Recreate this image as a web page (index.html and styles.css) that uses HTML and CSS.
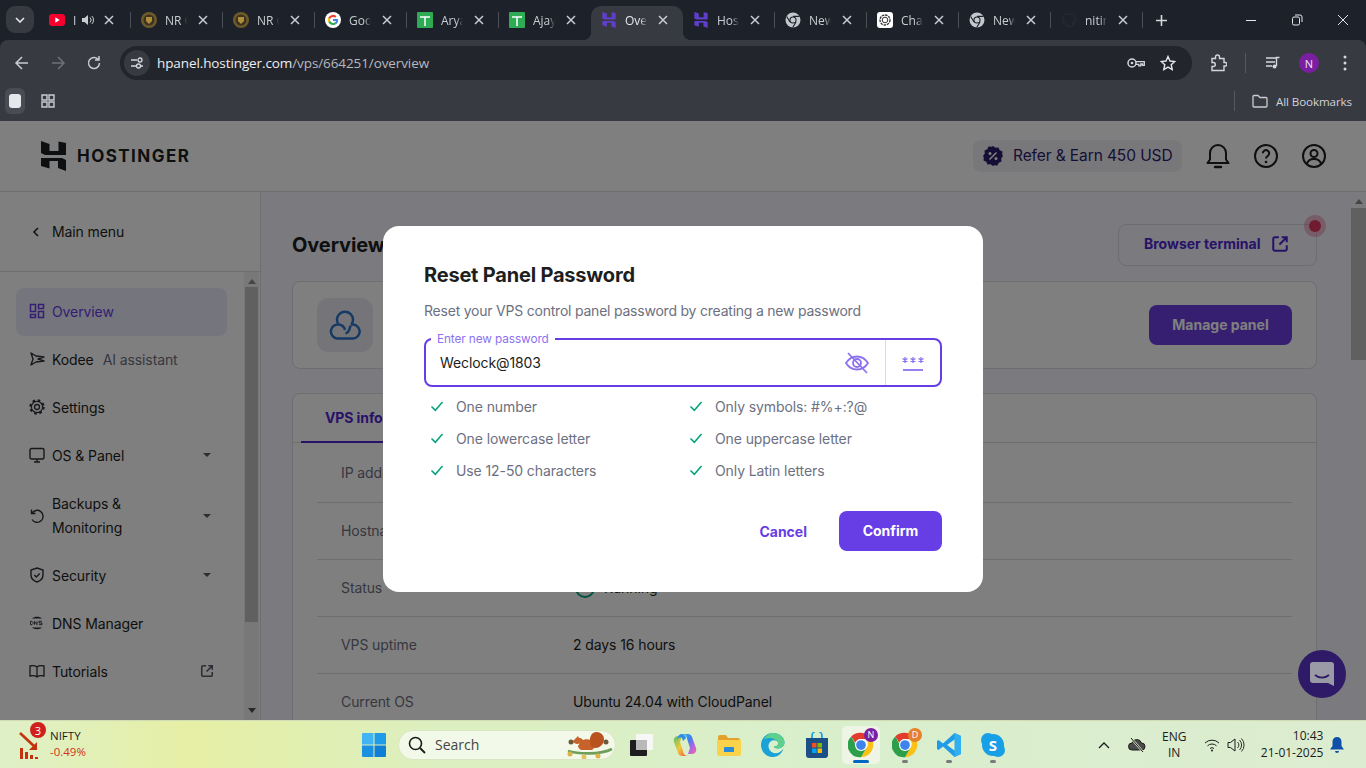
FILE: index.html
```html
<!DOCTYPE html>
<html lang="en">
<head>
<meta charset="utf-8">
<title>Overview</title>
<link rel="stylesheet" href="styles.css">
</head>
<body>
<svg class="defs" width="0" height="0" aria-hidden="true">
  <symbol id="x" viewBox="0 0 12 12"><path d="M2 2l8 8M10 2l-8 8" stroke="#c9ccd3" stroke-width="1.500" fill="none"/></symbol>
  <symbol id="hst" viewBox="0 0 25 30"><path d="M0 0l8.500 3v7h9V.500L25 2v12H4l-4-2zM0 17h21l4 2v11l-8-3v-7H8.500v7.500L0 25z"/></symbol>
  <symbol id="gchrome" viewBox="0 0 16 16"><circle cx="8" cy="8" r="7.500" fill="#c4c7ce"/><circle cx="8" cy="8" r="3.600" fill="#1d2129"/><circle cx="8" cy="8" r="2.500" fill="#c4c7ce"/><path d="M8 4.400h6.500M5 10l-3.300-5.500M11 10l-3.300 5.500" stroke="#1d2129" stroke-width="1.100"/></symbol>
  <symbol id="check" viewBox="0 0 14 12"><path d="M1.500 6.500l3.800 3.800 7.200-8.300" fill="none" stroke="#00a37a" stroke-width="1.500"/></symbol>
  <symbol id="caret" viewBox="0 0 10 6"><path d="M1 1h8l-4 4z"/></symbol>
  <symbol id="color-chrome" viewBox="0 0 32 32"><path d="M16 1a15 15 0 0 1 13 7.500H16a7.500 7.500 0 0 0-7 4.800L4 5.500A15 15 0 0 1 16 1z" fill="#e33b2e"/><path d="M29 8.500A15 15 0 0 1 16 31l6.500-11.300a7.500 7.500 0 0 0-.5-11.200z" fill="#fbc116"/><path d="M16 31A15 15 0 0 1 4 5.500l6 11a7.500 7.500 0 0 0 12.500 3.200z" fill="#2d9f4a"/><circle cx="16" cy="16" r="7.500" fill="#fff"/><circle cx="16" cy="16" r="6" fill="#3f83ec"/></symbol>
  <symbol id="ext" viewBox="0 0 16 16"><path d="M7 2H3.500A1.500 1.500 0 0 0 2 3.500v9A1.500 1.500 0 0 0 3.500 14h9a1.500 1.500 0 0 0 1.500-1.500V9M9.500 2H14v4.500M14 2L7.500 8.500" fill="none" stroke="currentColor" stroke-width="1.800"/></symbol>
  <linearGradient id="cop" x1="0" y1="0" x2="1" y2="1"><stop offset="0" stop-color="#2fb5e8"/><stop offset=".4" stop-color="#3f7ff0"/><stop offset=".7" stop-color="#b565e0"/><stop offset="1" stop-color="#f06a9a"/></linearGradient>
  <linearGradient id="cop2" x1="0" y1="0" x2="1" y2="1"><stop offset="0" stop-color="#58c26a"/><stop offset=".5" stop-color="#f0c83a"/><stop offset="1" stop-color="#f0563a"/></linearGradient>
</svg>

<header class="tabstrip">
  <button class="tabsearch"><svg width="10" height="6" viewBox="0 0 10 6"><path d="M1 1l4 4 4-4" fill="none" stroke="#e4e6ea" stroke-width="1.600"/></svg></button>
  <div class="tabs">
    <div class="tab"><svg class="fav" viewBox="0 0 16 12"><rect width="16" height="12" rx="3" fill="#f7002e"/><path d="M6.300 3.300l4.400 2.700-4.400 2.700z" fill="#fff"/></svg><span class="tab-title tiny">I</span><svg class="speaker" viewBox="0 0 14 14"><path d="M1 5v4h2.500L7 12V2L3.500 5z" fill="#c9ccd3"/><path d="M9 4.500a3.500 3.500 0 0 1 0 5M10.800 3a5.500 5.500 0 0 1 0 8" fill="none" stroke="#c9ccd3"/></svg><svg class="close"><use href="#x"/></svg></div>
    <div class="tab"><svg class="fav" viewBox="0 0 16 16"><circle cx="8" cy="8" r="8" fill="#6e5a2a"/><circle cx="8" cy="8" r="5.500" fill="#3c3320"/><path d="M5 5h6v4l-3 3-3-3z" fill="#b08d3c"/></svg><span class="tab-title">NR College</span><svg class="close"><use href="#x"/></svg></div>
    <div class="tab"><svg class="fav" viewBox="0 0 16 16"><circle cx="8" cy="8" r="8" fill="#6e5a2a"/><circle cx="8" cy="8" r="5.500" fill="#3c3320"/><path d="M5 5h6v4l-3 3-3-3z" fill="#b08d3c"/></svg><span class="tab-title">NR College</span><svg class="close"><use href="#x"/></svg></div>
    <div class="tab"><svg class="fav" viewBox="0 0 16 16"><circle cx="8" cy="8" r="8" fill="#fff"/><path d="M13 8.200c0-.4 0-.8-.1-1.100H8v2h2.900a2.400 2.400 0 0 1-1.100 1.600l1.700 1.300C12.500 11.100 13 9.800 13 8.200z" fill="#4285f4"/><path d="M8 13c1.400 0 2.600-.5 3.500-1.300l-1.700-1.300c-.5.300-1.100.5-1.800.5a3.100 3.100 0 0 1-2.900-2.100l-1.800 1.300A5.200 5.200 0 0 0 8 13z" fill="#34a853"/><path d="M5.100 8.800a3 3 0 0 1 0-1.900L3.300 5.600a5 5 0 0 0 0 4.500z" fill="#fbbc05"/><path d="M8 5c.8 0 1.500.3 2 .8l1.500-1.500A5.200 5.200 0 0 0 3.300 5.600l1.800 1.300A3.100 3.100 0 0 1 8 5z" fill="#ea4335"/></svg><span class="tab-title">Google</span><svg class="close"><use href="#x"/></svg></div>
    <div class="tab"><svg class="fav" viewBox="0 0 16 16"><rect width="16" height="16" rx="1" fill="#2faa55"/><path d="M3 5h10M8 5v9" stroke="#fff" stroke-width="1.500"/></svg><span class="tab-title">Arya</span><svg class="close"><use href="#x"/></svg></div>
    <div class="tab"><svg class="fav" viewBox="0 0 16 16"><rect width="16" height="16" rx="1" fill="#2faa55"/><path d="M3 5h10M8 5v9" stroke="#fff" stroke-width="1.500"/></svg><span class="tab-title">Ajay</span><svg class="close"><use href="#x"/></svg></div>
    <div class="tab active"><svg class="fav hpurple"><use href="#hst"/></svg><span class="tab-title">Overview</span><svg class="close"><use href="#x"/></svg></div>
    <div class="tab"><svg class="fav hpurple"><use href="#hst"/></svg><span class="tab-title">Hostinger</span><svg class="close"><use href="#x"/></svg></div>
    <div class="tab"><svg class="fav"><use href="#gchrome"/></svg><span class="tab-title">New Tab</span><svg class="close"><use href="#x"/></svg></div>
    <div class="tab"><svg class="fav" viewBox="0 0 16 16"><rect width="16" height="16" rx="3" fill="#fff"/><circle cx="8" cy="8" r="5" fill="none" stroke="#333" stroke-width="1.300" stroke-dasharray="2.500 .8"/><circle cx="8" cy="8" r="2.800" fill="none" stroke="#333"/></svg><span class="tab-title">ChatGPT</span><svg class="close"><use href="#x"/></svg></div>
    <div class="tab"><svg class="fav"><use href="#gchrome"/></svg><span class="tab-title">New Tab</span><svg class="close"><use href="#x"/></svg></div>
    <div class="tab"><svg class="fav" viewBox="0 0 16 16"><circle cx="8" cy="8" r="7.500" fill="#23272e"/><path d="M5 14v-2.500c-2 .3-2.500-1-3-1.500M11 14v-3c0-.8-.3-1.200-.6-1.500 1.600-.2 2.800-1 2.800-3 0-.7-.3-1.300-.7-1.800.2-.5.2-1.100-.1-1.800-.7 0-1.300.4-1.800.7a7 7 0 0 0-5.200 0C4.900 3.300 4.300 2.900 3.600 2.900c-.3.700-.3 1.300-.1 1.800-.4.500-.7 1.100-.7 1.800 0 2 1.200 2.800 2.800 3-.4.400-.6 1-.6 1.500" fill="#1d2129"/></svg><span class="tab-title">nitin</span><svg class="close"><use href="#x"/></svg></div>
    <button class="newtab"><svg width="13" height="13" viewBox="0 0 13 13"><path d="M6.500 1v11M1 6.500h11" stroke="#d5d7dc" stroke-width="1.600"/></svg></button>
  </div>
  <div class="winctl">
    <svg width="12" height="12" viewBox="0 0 12 12"><path d="M1 6.500h10" stroke="#e4e6ea"/></svg>
    <svg width="12" height="12" viewBox="0 0 12 12"><rect x="1.500" y="3" width="7" height="8" rx="1.500" fill="none" stroke="#e4e6ea"/><path d="M4 1h5a2 2 0 0 1 2 2v5" fill="none" stroke="#e4e6ea"/></svg>
    <svg width="12" height="12" viewBox="0 0 12 12"><path d="M1 1l10 10M11 1L1 11" stroke="#e4e6ea"/></svg>
  </div>
</header>

<nav class="toolbar">
  <div class="navbtns">
    <svg width="16" height="16" viewBox="0 0 16 16"><path d="M14 8H2.500M8 2L2 8l6 6" fill="none" stroke="#c9ccd3" stroke-width="1.500"/></svg>
    <svg width="16" height="16" viewBox="0 0 16 16"><path d="M2 8h11.500M8 2l6 6-6 6" fill="none" stroke="#6e7178" stroke-width="1.500"/></svg>
    <svg width="16" height="16" viewBox="0 0 16 16"><path d="M13.500 8A5.500 5.500 0 1 1 12 4.200M13 1v4h-4" fill="none" stroke="#c9ccd3" stroke-width="1.500"/></svg>
  </div>
  <div class="omnibox">
    <span class="site-chip"><svg width="14" height="14" viewBox="0 0 14 14"><path d="M1 4h6M11 10h2M1 10h5" stroke="#d5d7dc" stroke-width="1.300"/><circle cx="10" cy="4" r="2" fill="none" stroke="#d5d7dc" stroke-width="1.300"/><circle cx="8.500" cy="10" r="2" fill="none" stroke="#d5d7dc" stroke-width="1.300"/></svg></span>
    <span class="url"><b>hpanel.hostinger.com</b>/vps/664251/overview</span>
    <svg class="omni-key" width="18" height="12" viewBox="0 0 18 12"><circle cx="5" cy="6" r="4" fill="none" stroke="#d5d7dc" stroke-width="1.500"/><circle cx="5" cy="6" r="1.300" fill="#d5d7dc"/><path d="M9 4.700h8.300v3.600h-1.800V7h-1.700v1.800h-2V7.300H9" fill="none" stroke="#d5d7dc" stroke-width="1.300"/></svg>
    <svg class="omni-star" width="16" height="16" viewBox="0 0 16 16"><path d="M8 1.500l2 4.500 4.800.5-3.600 3.200 1 4.800L8 12.100l-4.200 2.400 1-4.800L1.200 6.500 6 6z" fill="none" stroke="#e4e6ea" stroke-width="1.400"/></svg>
  </div>
  <div class="tool-right">
    <svg class="t-ext" width="17" height="18" viewBox="0 0 17 18"><path d="M2 4.500h3.500V3a2 2 0 0 1 4 0v1.500H14v4h1.500a1.800 1.800 0 0 1 0 3.500H14v4.500H2v-4h1.300a2 2 0 0 0 0-4H2z" fill="none" stroke="#d5d7dc" stroke-width="1.400"/></svg>
    <span class="t-sep"></span>
    <svg class="t-media" width="16" height="14" viewBox="0 0 16 14"><path d="M1 2h11M1 6h9M1 10h6" stroke="#d5d7dc" stroke-width="1.400"/><path d="M14.500 1.500h-3V10" fill="none" stroke="#d5d7dc" stroke-width="1.400"/><circle cx="9.500" cy="10.500" r="2" fill="#d5d7dc"/></svg>
    <span class="avatar">N</span>
    <svg class="t-dots" width="4" height="16" viewBox="0 0 4 16"><circle cx="2" cy="2" r="1.500" fill="#d5d7dc"/><circle cx="2" cy="8" r="1.500" fill="#d5d7dc"/><circle cx="2" cy="14" r="1.500" fill="#d5d7dc"/></svg>
  </div>
</nav>

<div class="bookmarks">
  <span class="bm-first"><i></i></span>
  <svg class="bm-grid" width="14" height="14" viewBox="0 0 14 14"><path d="M1 1h5v5H1zM8 1h5v5H8zM1 8h5v5H1zM8 8h5v5H8z" fill="none" stroke="#c9ccd3" stroke-width="1.400"/></svg>
  <span class="bm-spacer"></span>
  <span class="t-sep bm-sep"></span>
  <svg width="16" height="14" viewBox="0 0 16 14"><path d="M1 2.500a1 1 0 0 1 1-1h4l2 2h6a1 1 0 0 1 1 1v7.500a1 1 0 0 1-1 1H2a1 1 0 0 1-1-1z" fill="none" stroke="#c9ccd3" stroke-width="1.300"/></svg>
  <span class="bm-all">All Bookmarks</span>
</div>

<main class="page">
  <div class="site-head">
    <svg class="logo"><use href="#hst"/></svg>
    <span class="wordmark">HOSTINGER</span>
    <span class="head-spacer"></span>
    <span class="refer"><svg width="20" height="20" viewBox="0 0 20 20"><path d="M10 0l2.500 1.800 3-.3 1.200 2.800 2.800 1.200-.3 3L20 10l-1.800 2.500.3 3-2.800 1.200-1.200 2.800-3-.3L10 20l-2.500-1.800-3 .3-1.200-2.800-2.800-1.200.3-3L0 10l1.800-2.500-.3-3 2.800-1.200 1.200-2.800 3 .3z" fill="#2f1c6a"/><path d="M13.500 6.500l-7 7" stroke="#fff" stroke-width="1.600"/><circle cx="7" cy="7.500" r="1.500" fill="#fff"/><circle cx="13" cy="12.500" r="1.500" fill="#fff"/></svg>Refer &amp; Earn 450 USD</span>
    <svg class="hicon" width="24" height="26" viewBox="0 0 24 26"><path d="M1.500 20h21l-2.500-3.500V10a8 8 0 0 0-16 0v6.500z" fill="none" stroke="#1d1e20" stroke-width="2" stroke-linejoin="round"/><path d="M9 24h6" stroke="#1d1e20" stroke-width="2.400" stroke-linecap="round"/></svg>
    <svg class="hicon" width="24" height="24" viewBox="0 0 24 24"><circle cx="12" cy="12" r="11" fill="none" stroke="#1d1e20" stroke-width="2"/><path d="M8.800 9.300a3.200 3.200 0 1 1 4.800 2.800c-1 .6-1.600 1.200-1.600 2.400" fill="none" stroke="#1d1e20" stroke-width="2"/><circle cx="12" cy="18" r="1.300" fill="#1d1e20"/></svg>
    <svg class="hicon" width="24" height="24" viewBox="0 0 24 24"><circle cx="12" cy="12" r="11" fill="none" stroke="#1d1e20" stroke-width="2"/><circle cx="12" cy="9.500" r="3.500" fill="none" stroke="#1d1e20" stroke-width="2"/><path d="M4.800 20c1-3.500 3.800-5 7.200-5s6.200 1.500 7.200 5" fill="none" stroke="#1d1e20" stroke-width="2"/></svg>
  </div>
  <div class="page-body">
    <aside class="sidebar">
      <div class="mainmenu"><svg width="8" height="10" viewBox="0 0 8 10"><path d="M6 1L2 5l4 4" fill="none" stroke="#1d1e20" stroke-width="1.500"/></svg><span>Main menu</span></div>
      <div class="side-scroll">
        <ul class="nav">
          <li class="nav-item current"><svg width="16" height="16" viewBox="0 0 16 16"><path d="M1.500 1.500h5v7h-5zM9.500 1.500h5v4h-5zM9.500 8.500h5v6h-5zM1.500 11.500h5v3h-5z" fill="none" stroke="#673de6" stroke-width="1.500"/></svg><span>Overview</span></li>
          <li class="nav-item"><svg width="16" height="16" viewBox="0 0 16 16"><path d="M2 2l5 3 8 1-6 2 6 2-8 1-5 3 2-6z" fill="none" stroke="#2f3038" stroke-width="1.400" stroke-linejoin="round"/></svg><span>Kodee</span><span class="muted">AI assistant</span></li>
          <li class="nav-item"><svg width="16" height="16" viewBox="0 0 16 16"><circle cx="8" cy="8" r="6.500" fill="none" stroke="#2f3038" stroke-width="2.400" stroke-dasharray="2.500 2.600"/><circle cx="8" cy="8" r="5.600" fill="#fff" stroke="#2f3038" stroke-width="1.200"/><circle cx="8" cy="8" r="2.500" fill="#fff" stroke="#2f3038" stroke-width="1.300"/></svg><span>Settings</span></li>
          <li class="nav-item"><svg width="16" height="16" viewBox="0 0 16 16"><rect x="1" y="1.500" width="14" height="10.500" rx="1.500" fill="none" stroke="#2f3038" stroke-width="1.400"/><path d="M5 15h6M8 12v3" stroke="#2f3038" stroke-width="1.400"/></svg><span>OS &amp; Panel</span><svg class="caret"><use href="#caret"/></svg></li>
          <li class="nav-item tall"><svg width="16" height="16" viewBox="0 0 16 16"><path d="M2.800 5.500A6 6 0 1 1 3 11.500M2.500 1.500v4h4" fill="none" stroke="#2f3038" stroke-width="1.400"/></svg><span>Backups &amp;<br>Monitoring</span><svg class="caret"><use href="#caret"/></svg></li>
          <li class="nav-item"><svg width="16" height="16" viewBox="0 0 16 16"><path d="M8 1l6 2v5c0 3.500-2.500 5.800-6 7-3.500-1.200-6-3.500-6-7V3z" fill="none" stroke="#2f3038" stroke-width="1.400"/><path d="M5.300 8l2 2 3.400-3.500" fill="none" stroke="#2f3038" stroke-width="1.300"/></svg><span>Security</span><svg class="caret"><use href="#caret"/></svg></li>
          <li class="nav-item"><svg width="16" height="16" viewBox="0 0 16 16"><path d="M3 3.500C5 1.200 11 1.200 13 3.500zM3 12.500c2 2.300 8 2.300 10 0z" fill="#2f3038"/><path d="M1.500 6.300v3.400h1.500l1-1.200v-1l-1-1.200zM5.500 9.700V6.300l2.500 3.400V6.300M13 6.300h-3v1.700h3v1.700h-3" fill="none" stroke="#2f3038" stroke-width=".9"/></svg><span>DNS Manager</span></li>
          <li class="nav-item"><svg width="16" height="16" viewBox="0 0 16 16"><path d="M8 4C6.500 2.800 3.500 2.500 1 3v10c2.500-.5 5.500-.2 7 1 1.500-1.200 4.500-1.500 7-1V3c-2.500-.5-5.500-.2-7 1zM8 4v10" fill="none" stroke="#2f3038" stroke-width="1.300"/></svg><span>Tutorials</span><svg class="side-ext"><use href="#ext"/></svg></li>
        </ul>
        <div class="scrollbar thin"><i class="up"></i><b></b><i class="down"></i></div>
      </div>
    </aside>
    <section class="content">
      <div class="title-row">
        <h1>Overview</h1>
        <button class="terminal">Browser terminal<svg width="18" height="18"><use href="#ext"/></svg><span class="pulse"></span></button>
      </div>
      <div class="card plan">
        <span class="plan-icon"><svg width="32" height="30" viewBox="0 0 32 30"><path d="M10 14.500A7 7 0 1 0 8 28.500h16a7 7 0 1 0-2-13.800M9.800 14.800A8 8 0 1 1 22.200 14.800M10 14.500a7 7 0 0 1 6 5.500M16.500 23.500c2.500-.5 4-2.500 5-8" fill="none" stroke="#2a74c9" stroke-width="2.500"/></svg></span>
        <button class="manage">Manage panel</button>
      </div>
      <div class="card info">
        <div class="info-tabs"><span class="info-tab">VPS information</span></div>
        <dl class="rows">
          <div class="row first"><dt>IP address</dt><dd></dd></div>
          <div class="row"><dt>Hostname</dt><dd></dd></div>
          <div class="row"><dt>Status</dt><dd class="status"><span class="ring"></span>Running</dd></div>
          <div class="row"><dt>VPS uptime</dt><dd>2 days 16 hours</dd></div>
          <div class="row"><dt>Current OS</dt><dd>Ubuntu 24.04 with CloudPanel</dd></div>
        </dl>
      </div>
    </section>
    <div class="scrollbar wide"><i class="up"></i><b></b></div>
  </div>
  <div class="overlay">
    <div class="modal">
      <h2>Reset Panel Password</h2>
      <p class="desc">Reset your VPS control panel password by creating a new password</p>
      <div class="field">
        <label>Enter new password</label>
        <span class="value">Weclock@1803</span>
        <svg class="eye" width="26" height="24" viewBox="0 0 26 24"><path d="M2 12c2.500-4 6-6.500 11-6.500S21.500 8 24 12c-2.500 4-6 6.500-11 6.500S4.500 16 2 12z" fill="none" stroke="#8c71f0" stroke-width="1.800"/><circle cx="13" cy="12" r="4" fill="none" stroke="#8c71f0" stroke-width="1.800"/><path d="M4 2l19 20" stroke="#8c71f0" stroke-width="1.800"/></svg>
        <span class="gen"><svg width="22" height="16" viewBox="0 0 22 16"><path d="M1 15h20" stroke="#8c71f0" stroke-width="1.800"/><path d="M3 2v6M.5 3.500l5 3M.5 6.500l5-3M11 2v6M8.500 3.500l5 3M8.500 6.500l5-3M19 2v6M16.500 3.500l5 3M16.500 6.500l5-3" stroke="#8c71f0" stroke-width="1.300"/></svg></span>
      </div>
      <ul class="rules">
        <li><svg width="14" height="12"><use href="#check"/></svg>One number</li>
        <li><svg width="14" height="12"><use href="#check"/></svg>Only symbols: #%+:?@</li>
        <li><svg width="14" height="12"><use href="#check"/></svg>One lowercase letter</li>
        <li><svg width="14" height="12"><use href="#check"/></svg>One uppercase letter</li>
        <li><svg width="14" height="12"><use href="#check"/></svg>Use 12-50 characters</li>
        <li><svg width="14" height="12"><use href="#check"/></svg>Only Latin letters</li>
      </ul>
      <div class="actions">
        <button class="cancel">Cancel</button>
        <button class="confirm">Confirm</button>
      </div>
    </div>
  </div>
  <button class="chat"><svg width="26" height="26" viewBox="0 0 26 26"><path d="M4 1h18a3 3 0 0 1 3 3v21l-6-3H4a3 3 0 0 1-3-3V4a3 3 0 0 1 3-3z" fill="#9a9aa6"/><path d="M6 14c4 3.500 10 3.500 14 0" fill="none" stroke="#2e1a66" stroke-width="1.800"/></svg></button>
</main>

<footer class="taskbar">
  <div class="widget">
    <svg class="widget-ico" width="24" height="30" viewBox="0 0 24 30"><path d="M1 3l15 14" stroke="#c4320e" stroke-width="2.600"/><path d="M18 12v8h-8z" fill="#c4320e"/><path d="M1 18h3v11H1zM6 22h3v7H6zM11 25h3v4h-3zM16 27h3v2h-3z" fill="#c4320e"/></svg>
    <span class="badge">3</span>
    <div class="widget-text"><span>NIFTY</span><span class="neg">-0.49%</span></div>
  </div>
  <div class="dock">
    <svg class="d-win" width="24" height="24" viewBox="0 0 24 24"><path d="M0 1a1 1 0 0 1 1-1h10.500v11.500H0z" fill="#42b4f4"/><path d="M12.500 0H23a1 1 0 0 1 1 1v10.500H12.500z" fill="#1f9be8"/><path d="M0 12.500h11.500V24H1a1 1 0 0 1-1-1z" fill="#1b8fe0"/><path d="M12.500 12.500H24V23a1 1 0 0 1-1 1H12.500z" fill="#0f7fd6"/></svg>
    <div class="search">
      <svg width="18" height="18" viewBox="0 0 18 18"><circle cx="7.500" cy="7.500" r="6" fill="none" stroke="#1c1c1c" stroke-width="1.600"/><path d="M12 12l5 5" stroke="#1c1c1c" stroke-width="1.800"/></svg>
      <span>Search</span>
      <svg class="squirrel" width="50" height="30" viewBox="0 0 50 30"><path d="M4 21c10 3 32 4 44-2" fill="none" stroke="#6f9e5a" stroke-width="2.600"/><path d="M17 11c5-3 11-2 13 3 1 3 0 5-2 6H17c-2-1-3-3-3-4z" fill="#c6622a"/><path d="M28 17c-3-4-3-11 1-14 5-3 11 1 11 6 0 6-6 11-12 8z" fill="#b8531f"/><path d="M11 9l3-3 1 2c3 0 5 2 4 5l-6 1c-2 0-3-2-5-2z" fill="#c6622a"/><circle cx="7" cy="12" r="2.500" fill="#6d5a3a"/><circle cx="42" cy="12" r="2.500" fill="#6d5a3a"/><circle cx="6" cy="24" r="2.500" fill="#d9b24a"/><circle cx="20" cy="27" r="2.500" fill="#e0c060"/><circle cx="34" cy="26" r="2.500" fill="#d9b24a"/></svg>
    </div>
    <svg class="d-task" width="24" height="22" viewBox="0 0 24 22"><rect x="7" y="0" width="17" height="16" rx="1" fill="#f7f7f5"/><rect x="1" y="6" width="17" height="16" rx="1" fill="#1e1e1e"/><rect x="7" y="6" width="11" height="10" fill="#b9b9b9"/></svg>
    <svg class="d-ico" width="24" height="24" viewBox="0 0 24 24"><path d="M9 1h6c2 0 3 1 4 3l4 11c1 3-1 6-4 6h-4l2-6L13.500 4C13 2 11 1 9 1z" fill="url(#cop)"/><path d="M15 23H9c-2 0-3-1-4-3L1 9c-1-3 1-6 4-6h4L7 9l3.500 11c.5 2 2.500 3 4.500 3z" fill="url(#cop2)"/><path d="M9 1C6 1 5 3 4 6l-.5 1.500C5 5 7 4 9 5l1 3 3-3C12.500 3 11 1 9 1z" fill="#2f8fe8"/></svg>
    <svg class="d-ico" width="24" height="22" viewBox="0 0 24 22"><path d="M1 3a2 2 0 0 1 2-2h6l2 3h10a2 2 0 0 1 2 2v2H1z" fill="#e3a32b"/><path d="M0 6h24v14a2 2 0 0 1-2 2H2a2 2 0 0 1-2-2z" fill="#fbd34a"/><path d="M8 13h8a1 1 0 0 1 1 1v4H7v-4a1 1 0 0 1 1-1z" fill="#2a8bd8"/></svg>
    <svg class="d-ico" width="24" height="24" viewBox="0 0 24 24"><path d="M22.500 15.500c-1.500 5-6 8.500-10.500 8.500C5 24 0 18.500 0 12 0 5 5.500 0 12 0c6 0 11.500 4 11.500 9.500 0 3.500-3 6-7 6-2 0-3.500-.8-3.500-2 2 0 5-1 4-4-1-2.500-5-3-7.500-1-3 2.500-2.500 8 1 10.500 4 2.500 9 1 12-3.500z" fill="#1aa2d8"/><path d="M12 0c6 0 11.500 4 11.500 9.500 0 3.500-3 6-7 6-2 0-3.500-.8-3.500-2 2 0 5-1 4-4C15.500 6 9 3 3 6.500 5 2.500 8.500 0 12 0z" fill="#5ed08c"/></svg>
    <svg class="d-ico" width="24" height="26" viewBox="0 0 24 26"><path d="M7 7V4a5 5 0 0 1 10 0v3" fill="none" stroke="#1ea1e0" stroke-width="1.800"/><path d="M1 6h22v17a3 3 0 0 1-3 3H4a3 3 0 0 1-3-3z" fill="#1b4f86"/><path d="M7 11h4.500v4.500H7z" fill="#f25022"/><path d="M12.500 11H17v4.500h-4.500z" fill="#7fba00"/><path d="M7 16.500h4.500V21H7z" fill="#00a4ef"/><path d="M12.500 16.500H17V21h-4.500z" fill="#ffb900"/></svg>
    <div class="d-active"><svg width="26" height="26"><use href="#color-chrome"/></svg><span class="pbadge n">N</span><i></i></div>
    <div class="d-run"><svg width="26" height="26"><use href="#color-chrome"/></svg><span class="pbadge o">D</span><i></i></div>
    <div class="d-run"><svg width="26" height="26" viewBox="0 0 26 26"><path d="M18.500 1L25 4v18l-6.500 3L7 14.500 2.500 18 1 17v-8l1.500-1L7 11.500z" fill="#1f9ce8"/><path d="M18.500 1L25 4v18l-6.500 3z" fill="#2fb0f0"/><path d="M18.500 7.500L11 13l7.500 5.500z" fill="#e4f0cc"/></svg><i></i></div>
    <div class="d-run"><svg width="26" height="26" viewBox="0 0 26 26"><circle cx="8" cy="8" r="7" fill="#18a0e6"/><circle cx="18" cy="18" r="7" fill="#18a0e6"/><circle cx="13" cy="13" r="11" fill="#18a0e6"/></svg><span class="skype">S</span><i></i></div>
  </div>
  <div class="tray">
    <svg class="tr-chev" width="12" height="8" viewBox="0 0 12 8"><path d="M1 7l5-5 5 5" fill="none" stroke="#1c1c1c" stroke-width="1.300"/></svg>
    <svg class="tr-cloud" width="18" height="16" viewBox="0 0 18 16"><path d="M4 13a3.500 3.500 0 0 1 0-7 5 5 0 0 1 9.500 0 3.500 3.500 0 0 1 0 7z" fill="#4a4a4a" stroke="#1c1c1c"/><path d="M3 1l12 14" stroke="#e0ecc8" stroke-width="2"/><path d="M3 1l12 14" stroke="#1c1c1c"/></svg>
    <div class="lang"><span>ENG</span><span>IN</span></div>
    <svg class="tr-wifi" width="16" height="14" viewBox="0 0 16 14"><path d="M1 5a10 10 0 0 1 14 0M3.500 7.800a6.500 6.500 0 0 1 9 0M6 10.500a3 3 0 0 1 4 0" fill="none" stroke="#1c1c1c"/><circle cx="8" cy="12.500" r="1" fill="#1c1c1c"/></svg>
    <svg class="tr-vol" width="18" height="16" viewBox="0 0 18 16"><path d="M1 5.500v5h2.500L8 14V2L3.500 5.500z" fill="none" stroke="#1c1c1c"/><path d="M10.500 5a4 4 0 0 1 0 6M12.500 3a7 7 0 0 1 0 10M14.500 1.500a9.500 9.500 0 0 1 0 13" fill="none" stroke="#1c1c1c" stroke-width=".9"/></svg>
    <div class="clock"><span>10:43</span><span>21-01-2025</span></div>
    <svg class="tr-bell" width="14" height="16" viewBox="0 0 14 16"><path d="M7 0a4.500 4.500 0 0 1 4.500 4.500V9L14 12.500H0L2.500 9V4.500A4.500 4.500 0 0 1 7 0zM5 14h4a2 2 0 0 1-4 0z" fill="#0f4fa8"/></svg>
  </div>
</footer>
</body>
</html>
```
FILE: styles.css
```css
* { box-sizing: border-box; margin: 0; padding: 0; }
html, body { width: 1366px; height: 768px; overflow: hidden; }
body { display: flex; flex-direction: column; font-family: "Open Sans", "Noto Sans", sans-serif; background: #1d2129; position: relative; }
button { border: 0; background: none; font: inherit; }
ul { list-style: none; }
.defs { position: absolute; }

/* browser chrome */
.tabstrip { height: 40px; flex: none; background: #1d2129; display: flex; align-items: flex-start; }
.tabsearch { width: 28px; height: 27px; margin: 6px 5px 0 6px; background: #383a42; border-radius: 9px; display: flex; align-items: center; justify-content: center; flex: none; }
.tabs { display: flex; height: 34px; margin-top: 6px; flex: 1; }
.tab { width: 92px; flex: none; position: relative; display: flex; align-items: center; padding: 0 0 6px 10px; color: #c9ccd3; font-size: 12px; }
.tab::after { content: ""; position: absolute; right: 0; top: 6px; height: 16px; width: 1px; background: #4b4e56; }
.tab:has(+ .active)::after { display: none; }
.tab.active { background: #383a42; border-radius: 10px 10px 0 0; color: #e4e6ea; }
.tab.active::before, .tab.active::after { content: ""; position: absolute; bottom: 0; top: auto; width: 8px; height: 8px; background: radial-gradient(circle at 0 0, transparent 8px, #383a42 8px); }
.tab.active::before { left: -8px; }
.tab.active::after { right: -8px; background: radial-gradient(circle at 100% 0, transparent 8px, #383a42 8px); }
.fav { width: 16px; height: 16px; flex: none; margin-right: 8px; }
.hpurple { fill: #5f3fc9; }
.tab-title { width: 22px; overflow: hidden; white-space: nowrap; flex: none; -webkit-mask-image: linear-gradient(90deg, #000 70%, transparent); mask-image: linear-gradient(90deg, #000 70%, transparent); }
.tab-title.tiny { width: 6px; }
.speaker { width: 14px; height: 14px; margin-left: 2px; flex: none; }
.tab .close { width: 12px; height: 12px; margin-left: 10px; flex: none; }
.tab .speaker + .close { margin-left: 8px; }
.newtab { margin-left: 11px; width: 14px; height: 28px; display: flex; align-items: center; justify-content: center; }
.winctl { display: flex; width: 146px; flex: none; padding-top: 14px; justify-content: space-between; padding-left: 25px; padding-right: 17px; }

.toolbar { height: 44px; flex: none; background: #383a42; display: flex; align-items: center; border-radius: 8px 8px 0 0; padding-top: 2px; }
.navbtns { width: 120px; flex: none; display: flex; gap: 20px; padding-left: 14px; }
.omnibox { width: 1072px; height: 34px; background: #22252c; border-radius: 17px; display: flex; align-items: center; flex: none; padding: 0 16px 0 4px; }
.site-chip { width: 26px; height: 26px; border-radius: 50%; background: #383a42; display: flex; align-items: center; justify-content: center; flex: none; }
.url { color: #b6b9c0; font-size: 13.500px; margin-left: 7px; flex: 1; white-space: nowrap; font-family: "Open Sans", sans-serif; letter-spacing: -.1px; }
.url b { color: #eceef1; font-weight: 400; }
.omni-star { margin-left: 15px; }
.tool-right { flex: 1; display: flex; align-items: center; }
.t-ext { margin-left: 18px; }
.t-sep { width: 1px; height: 20px; background: #55585f; display: block; }
.tool-right .t-sep { margin-left: 18px; }
.t-media { margin-left: 19px; }
.avatar { width: 20px; height: 20px; border-radius: 50%; background: #7b1fa2; color: #f0e4f5; font-size: 11px; display: flex; align-items: center; justify-content: center; margin-left: 18px; }
.t-dots { margin-left: 24px; }

.bookmarks { height: 37px; flex: none; background: #383a42; display: flex; align-items: center; padding: 0 14px 3px 5px; }
.bm-first { width: 20px; height: 26px; background: #4a4c54; border-radius: 6px; display: flex; align-items: center; justify-content: center; }
.bm-first i { width: 12px; height: 14px; background: #e6e7ea; border-radius: 3px; display: block; }
.bm-grid { margin-left: 16px; }
.bm-spacer { flex: 1; }
.bm-sep { margin-right: 17px; }
.bm-all { color: #d0d2d8; font-size: 11.600px; margin-left: 8px; letter-spacing: -.1px; }

/* hosting panel */
.page { flex: none; height: 599px; position: relative; overflow: hidden; background: #fff; font-family: Inter, sans-serif; color: #1d1e20; font-size: 14px; letter-spacing: -.1px; display: flex; flex-direction: column; }
.site-head { height: 71px; flex: none; border-bottom: 1px solid #dadce0; display: flex; align-items: center; padding: 0 40px 1px 41px; }
.logo { width: 25px; height: 30px; fill: #1d1e20; }
.wordmark { margin-left: 11px; font-size: 17px; font-weight: 700; letter-spacing: 1.450px; }
.head-spacer { flex: 1; }
.refer { width: 209px; height: 32px; background: #f0f0f5; border-radius: 8px; display: flex; align-items: center; gap: 10px; padding-left: 10px; font-size: 15.500px; color: #2f1c6a; white-space: nowrap; margin-right: 24px; }
.hicon { margin-left: 24px; }
.refer + .hicon { margin-left: 0; }

.page-body { flex: 1; display: flex; min-height: 0; }
.sidebar { width: 261px; flex: none; border-right: 1px solid #dadce0; display: flex; flex-direction: column; }
.mainmenu { height: 80px; flex: none; border-bottom: 1px solid #dadce0; display: flex; align-items: center; gap: 12px; padding-left: 32px; }
.side-scroll { flex: 1; display: flex; min-height: 0; }
.nav { width: 243px; padding: 16px 16px 0; }
.nav-item { height: 48px; display: flex; align-items: center; padding: 0 12px 2px 13px; border-radius: 8px; }
.nav-item > span:first-of-type { margin-left: 7px; }
.nav-item.tall { height: 72px; line-height: 24px; padding-bottom: 0; }
.nav-item.current { background: #ebebfa; color: #673de6; }
.muted { color: #6d7081; margin-left: 9px; }
.caret { width: 10px; height: 6px; margin-left: auto; margin-right: 3px; fill: #5a5c66; }
.side-ext { width: 14px; height: 14px; margin-left: auto; margin-right: 1px; color: #5a5c66; }

.scrollbar { display: flex; flex-direction: column; align-items: center; background: #f1f1f1; position: relative; }
.scrollbar.thin { width: 15px; margin-left: 1px; }
.scrollbar.thin b { width: 13px; height: 335px; background: #c1c1c1; display: block; margin-top: 3px; }
.scrollbar.wide { width: 15px; flex: none; background: #f6f6fb; }
.scrollbar.wide b { width: 15px; height: 152px; background: #c1c1c1; display: block; margin-top: 4px; }
.up { width: 0; height: 0; border: 4px solid transparent; border-bottom: 5px solid #8a8a8a; border-top: 0; margin-top: 7px; display: block; }
.down { width: 0; height: 0; border: 4px solid transparent; border-top: 5px solid #505050; border-bottom: 0; margin-top: 86px; display: block; }

.content { flex: 1; background: #f4f5ff; padding: 31px 34px 0 31px; min-width: 0; }
.title-row { display: flex; justify-content: space-between; align-items: center; height: 43px; }
h1 { font-size: 20px; font-weight: 700; }
.terminal { width: 199px; height: 42px; border: 1px solid #dadce0; border-radius: 8px; color: #5025d1; font-weight: 700; font-size: 14px; display: flex; align-items: center; gap: 11px; padding: 0 0 2px 25px; position: relative; font-family: inherit; }
.pulse { position: absolute; right: -5px; top: -5px; width: 12px; height: 12px; border-radius: 50%; background: #e0365f; box-shadow: 0 0 0 5px rgba(224, 54, 95, .3); }
.card { background: #fff; border: 1px solid #dadce0; border-radius: 8px; }
.plan { height: 88px; margin-top: 15px; display: flex; align-items: center; justify-content: space-between; padding: 0 24px; }
.plan-icon { width: 56px; height: 54px; background: #ebebf2; border-radius: 12px; display: flex; align-items: center; justify-content: center; }
.manage { width: 143px; height: 40px; background: #6d3fe0; color: #fff; font-weight: 700; font-size: 14px; border-radius: 8px; font-family: inherit; padding-bottom: 2px; }
.info { margin-top: 24px; height: 340px; }
.info-tabs { height: 49px; border-bottom: 1px solid #dadce0; padding-left: 8px; }
.info-tab { display: flex; align-items: center; width: 200px; height: 49px; padding-left: 24px; border-bottom: 2px solid #5025d1; color: #5025d1; font-weight: 700; }
.rows { padding: 0 24px; }
.row { height: 57px; display: flex; align-items: center; border-bottom: 1px solid #dadce0; padding: 0 0 1px 24px; }
.row.first { height: 60px; }
.row dt { width: 232px; color: #6d7081; flex: none; }
.status { display: flex; align-items: center; gap: 9px; padding-left: 2px; }
.ring { width: 20px; height: 20px; border: 2px solid #00a37a; border-radius: 50%; }

.chat { position: absolute; left: 1298px; top: 529px; width: 48px; height: 48px; border-radius: 50%; background: #2e1a66; display: flex; align-items: center; justify-content: center; z-index: 3; }

.overlay { position: absolute; inset: 0; background: rgba(0, 0, 0, .5); z-index: 2; display: flex; justify-content: center; align-items: flex-start; padding-top: 105px; }
.modal { width: 600px; height: 366px; background: #fff; border-radius: 16px; padding: 36px 41px 0; display: flex; flex-direction: column; }
h2 { font-size: 20px; font-weight: 700; line-height: 26px; letter-spacing: -.2px; }
.desc { color: #6d7081; margin-top: 12px; line-height: 22px; letter-spacing: -.22px; }
.field { margin-top: 16px; height: 49px; border: 2px solid #673de6; border-radius: 8px; position: relative; display: flex; align-items: center; padding-left: 14px; }
.field label { position: absolute; left: 5px; top: -8px; background: #fff; padding: 0 6px; font-size: 11.800px; line-height: 14px; color: #8c71f0; }
.value { flex: 1; }
.eye { margin-right: 15px; }
.gen { width: 55px; height: 45px; border-left: 1px solid #dadce0; display: flex; align-items: center; justify-content: center; }
.rules { display: grid; grid-template-columns: 259px 1fr; grid-auto-rows: 32px; margin-top: 4px; padding-left: 6px; }
.rules li { display: flex; align-items: center; gap: 12px; color: #6d7081; padding-bottom: 2px; }
.actions { margin-top: 24px; display: flex; justify-content: flex-end; align-items: center; gap: 32px; }
.cancel { color: #673de6; font-weight: 700; font-family: inherit; font-size: 14px; }
.confirm { width: 103px; height: 40px; background: #673de6; border-radius: 8px; color: #fff; font-weight: 700; font-family: inherit; font-size: 14px; padding-bottom: 2px; }

/* taskbar */
.taskbar { height: 48px; flex: none; position: relative; z-index: 4; display: flex; align-items: center; background: linear-gradient(90deg, #dff0c8 0, #e6efa4 14%, #dcefc0 32%, #d9efcc 60%, #dcecd0 100%); border-top: 1px solid #cfdcb4; color: #1c1c1c; font-family: "Open Sans", sans-serif; }
.widget { width: 362px; flex: none; display: flex; align-items: center; padding-left: 19px; position: relative; }
.badge { position: absolute; left: 30px; top: -6px; width: 16px; height: 16px; border-radius: 50%; background: #d0201c; color: #fff; font-size: 11px; display: flex; align-items: center; justify-content: center; }
.widget-text { display: flex; flex-direction: column; margin-left: 7px; font-size: 11.500px; line-height: 16px; padding-bottom: 1px; }
.neg { color: #d2301c; }
.dock { display: flex; align-items: center; flex: none; }
.search { width: 218px; height: 30px; margin-left: 12px; border-radius: 15px; background: #f3f9e8; border: 1px solid #d9e6c4; display: flex; align-items: center; padding-left: 9px; gap: 9px; font-size: 14px; color: #444; position: relative; overflow: hidden; }
.squirrel { margin-left: auto; margin-right: 1px; }
.d-task { margin-left: 13px; }
.d-ico { margin-left: 20px; }
.d-active, .d-run { width: 38px; height: 38px; display: flex; align-items: center; justify-content: center; position: relative; border-radius: 5px; }
.d-active { background: #eef5e4; margin-left: 13px; }
.d-run { margin-left: 6px; }
.d-active i, .d-run i { position: absolute; bottom: 1px; left: 50%; transform: translateX(-50%); width: 6px; height: 3px; border-radius: 2px; background: #7a7a7a; }
.d-active i { width: 16px; background: #0067c0; }
.pbadge { position: absolute; right: 2px; top: 2px; width: 14px; height: 14px; border-radius: 50%; font-size: 9px; color: #fff; display: flex; align-items: center; justify-content: center; }
.pbadge.n { background: #7b1fa2; }
.pbadge.o { background: #e6802a; }
.skype { position: absolute; color: #fff; font-weight: 700; font-size: 15px; }
.tray { flex: 1; display: flex; align-items: center; font-size: 12px; position: relative; }
.tr-chev { margin-left: 86px; }
.tr-cloud { margin-left: 18px; }
.lang { display: flex; flex-direction: column; align-items: center; line-height: 16px; margin-left: 16px; }
.tr-wifi { margin-left: 18px; }
.tr-vol { margin-left: 7px; }
.clock { display: flex; flex-direction: column; align-items: flex-end; width: 66px; margin-left: 12px; line-height: 17px; padding-bottom: 2px; }
.tr-bell { margin-left: 7px; }
```
